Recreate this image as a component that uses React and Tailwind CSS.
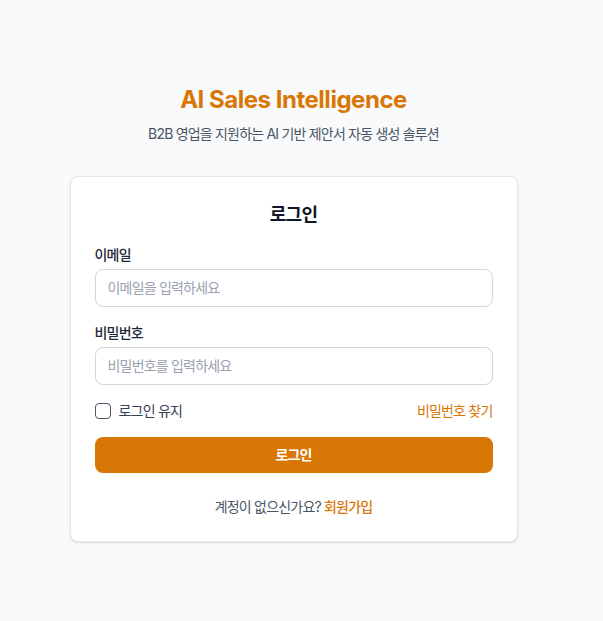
import React, { useState } from 'react';

const Login = () => {
  const [email, setEmail] = useState('');
  const [password, setPassword] = useState('');
  const [remember, setRemember] = useState(false);

  return (
    <div
      className="min-h-screen bg-gray-50 flex items-center justify-center pl-0 pr-4 pt-1 tracking-[-0.05em]"
      style={{ fontFamily: 'Inter, "Noto Sans CJK KR", sans-serif' }}
    >
      <div className="w-full max-w-md">
        {/* Header */}
        <div className="text-center mb-8">
          <h1 className="text-2xl font-bold text-[#d97706] tracking-[-0.02em]">AI Sales Intelligence</h1>
          <p className="mt-2 text-sm text-gray-600">B2B 영업을 지원하는 AI 기반 제안서 자동 생성 솔루션</p>
        </div>

        {/* Card */}
        <div className="bg-white border border-gray-200 rounded-lg shadow-sm p-6">
          <h2 className="text-lg font-semibold text-gray-900 text-center mb-4">로그인</h2>

          <div className="mb-4">
            <label className="block text-sm font-medium text-gray-800 mb-1">이메일</label>
            <input
              type="email"
              placeholder="이메일을 입력하세요"
              value={email}
              onChange={(e) => setEmail(e.target.value)}
              className="w-full px-3 py-2 text-sm border border-gray-300 rounded-lg placeholder-gray-400 focus:outline-none"
            />
          </div>

          <div className="mb-4">
            <label className="block text-sm font-medium text-gray-800 mb-1">비밀번호</label>
            <input
              type="password"
              placeholder="비밀번호를 입력하세요"
              value={password}
              onChange={(e) => setPassword(e.target.value)}
              className="w-full px-3 py-2 text-sm border border-gray-300 rounded-lg placeholder-gray-400 focus:outline-none"
            />
          </div>

          <div className="flex items-center justify-between mb-4">
            <label className="flex items-center text-sm text-gray-700">
              <input
                type="checkbox"
                checked={remember}
                onChange={(e) => setRemember(e.target.checked)}
                className="appearance-none w-4 h-4 border border-gray-600 rounded bg-white"
              />
              <span className="ml-2">로그인 유지</span>
            </label>
            <a href="#" className="text-sm text-[#d97706]">비밀번호 찾기</a>
          </div>

          <button className="w-full py-2 bg-[#d97706] text-white text-sm font-semibold rounded-lg">
            로그인
          </button>

          <p className="mt-6 text-center text-sm text-gray-600">
            계정이 없으신가요? <a href="#" className="text-[#d97706] font-medium">회원가입</a>
          </p>
        </div>
      </div>
    </div>
  );
};

export default function App() {
  return <Login />;
}
